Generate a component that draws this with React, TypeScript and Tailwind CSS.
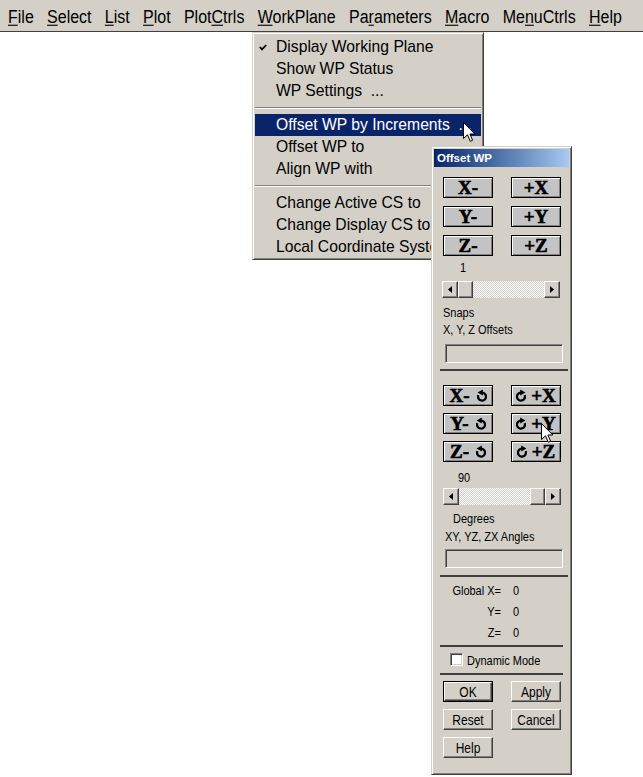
import React from "react";

type Item = { label: string; checked?: boolean; active?: boolean } | "sep";

const bar: [string, string, string][] = [
  ["", "F", "ile"],
  ["", "S", "elect"],
  ["", "L", "ist"],
  ["", "P", "lot"],
  ["Plot", "C", "trls"],
  ["", "W", "orkPlane"],
  ["Pa", "r", "ameters"],
  ["", "M", "acro"],
  ["Me", "n", "uCtrls"],
  ["", "H", "elp"],
];

const menuItems: Item[] = [
  { label: "Display Working Plane", checked: true },
  { label: "Show WP Status" },
  { label: "WP Settings  ..." },
  "sep",
  { label: "Offset WP by Increments  ...", active: true },
  { label: "Offset WP to" },
  { label: "Align WP with" },
  "sep",
  { label: "Change Active CS to" },
  { label: "Change Display CS to" },
  { label: "Local Coordinate Systems" },
];

const raised =
  "border border-t-white border-l-white border-b-[#404040] border-r-[#404040] bg-[#d4d0c8] shadow-[inset_-1px_-1px_#808080]";
const sunken =
  "border border-t-[#808080] border-l-[#808080] border-b-white border-r-white shadow-[inset_1px_1px_#404040,inset_-1px_-1px_#d4d0c8]";

// tall, narrow dialog text like the reference
const tall = "origin-center scale-y-[1.2]";

function BigBtn({ children }: { children: React.ReactNode }) {
  return (
    <div className="flex h-[21px] w-[50px] items-center justify-center gap-[1px] border border-black bg-[#c3c3c3] font-['Liberation_Serif',serif] text-[19px] font-bold leading-none shadow-[inset_1px_1px_#fff,inset_-1px_-1px_#808080] [-webkit-text-stroke:0.6px_black]">
      {children}
    </div>
  );
}

function Rot({ flip }: { flip?: boolean }) {
  return (
    <svg width="10" height="14" viewBox="0 0 10 14" className={flip ? "-scale-x-100" : ""}>
      <path d="M5 3.6 A4 4 0 1 1 1.3 6.2" fill="none" stroke="black" strokeWidth="2.3" />
      <path d="M0.6 3.6 L5.8 0.6 L5.8 6.6 Z" fill="black" />
    </svg>
  );
}

function Arrow({ dir }: { dir: "l" | "r" }) {
  return (
    <div className={`flex h-full w-[16px] items-center justify-center ${raised}`}>
      <svg width="4" height="7" viewBox="0 0 4 7">
        <path d={dir === "l" ? "M4 0 L0 3.5 L4 7 Z" : "M0 0 L4 3.5 L0 7 Z"} fill="black" />
      </svg>
    </div>
  );
}

function Scroll({ thumb }: { thumb: "left" | "right" }) {
  return (
    <div className="flex h-[17px] w-[118px]">
      <Arrow dir="l" />
      {thumb === "left" && <div className={`h-full w-[15px] ${raised}`} />}
      <div className="h-full flex-1 bg-[repeating-conic-gradient(#ffffff_0%_25%,#d4d0c8_0%_50%)] bg-[length:2px_2px]" />
      {thumb === "right" && <div className={`h-full w-[15px] ${raised}`} />}
      <Arrow dir="r" />
    </div>
  );
}

function Btn({ label, def }: { label: string; def?: boolean }) {
  return (
    <div className={`h-[21px] w-[50px] ${def ? "border border-black" : ""}`}>
      <div className={`flex h-full w-full items-center justify-center text-[12px] ${raised}`}>
        <span className={`inline-block ${tall}`}>{label}</span>
      </div>
    </div>
  );
}

function Cursor({ className }: { className: string }) {
  return (
    <svg width="13" height="21" viewBox="0 0 13 21" className={`absolute z-30 ${className}`}>
      <path
        d="M0.5 0.5 L0.5 16.5 L4.5 12.8 L7.3 19.3 L9.6 18.3 L6.9 12 L11.8 12 Z"
        fill="white"
        stroke="black"
        strokeWidth="1"
        strokeLinejoin="miter"
      />
    </svg>
  );
}

export default function App() {
  return (
    <div className="relative h-[777px] w-[643px] overflow-hidden bg-white font-['Liberation_Sans',Arial,sans-serif] text-black">
      {/* Menu bar */}
      <div className="flex h-[32px] items-center gap-[13.3px] border-b border-[#404040] bg-[#d4d0c8] pl-[8px] pt-[2px] text-[16px]">
        {bar.map(([a, u, b]) => (
          <span key={a + u + b} className="inline-block origin-center scale-y-[1.1] whitespace-pre">
            {a}
            <span className="underline decoration-1 underline-offset-[2px]">{u}</span>
            {b}
          </span>
        ))}
      </div>

      {/* WorkPlane dropdown */}
      <div className="absolute left-[252px] top-[32px] z-10 h-[228px] w-[232px] border border-t-[#d4d0c8] border-l-[#d4d0c8] border-b-[#404040] border-r-[#404040] bg-[#d4d0c8] p-[2px] shadow-[inset_1px_1px_#fff,inset_-1px_-1px_#808080]">
        <div className="flex flex-col pt-[1px]">
          {menuItems.map((it, i) =>
            it === "sep" ? (
              <div key={i} className="flex h-[12px] items-center">
                <div className="h-[2px] w-full border-t border-b border-t-[#808080] border-b-white" />
              </div>
            ) : (
              <div
                key={i}
                className={`relative flex h-[22px] items-center whitespace-pre pl-[21px] text-[15.7px] ${
                  it.active ? "bg-[#0a246a] text-white" : ""
                }`}
              >
                {it.checked && (
                  <svg width="8" height="7" viewBox="0 0 8 7" className="absolute left-[4px] top-[8px]">
                    <path d="M0.8 3 L3 5.4 L7.2 1" fill="none" stroke="black" strokeWidth="1.8" />
                  </svg>
                )}
                {it.label}
              </div>
            )
          )}
        </div>
      </div>

      {/* Offset WP dialog */}
      <div className="absolute left-[431px] top-[146px] z-20 flex h-[629px] w-[141px] flex-col border border-t-[#d4d0c8] border-l-[#d4d0c8] border-b-[#404040] border-r-[#404040] bg-[#d4d0c8] p-[2px] shadow-[inset_1px_1px_#fff,inset_-1px_-1px_#808080]">
        <div className="h-[18px] bg-linear-to-r from-[#0a246a] to-[#a6caf0] pl-[3px] text-[11.5px] font-bold leading-[18px] text-white">
          Offset WP
        </div>

        <div className="flex flex-col pl-[9px] pr-[8px] text-[11px] leading-[14px]">
          <div className="mt-[10px] grid grid-cols-[50px_50px] gap-x-[18px] gap-y-[8px]">
            <BigBtn>X-</BigBtn>
            <BigBtn>+X</BigBtn>
            <BigBtn>Y-</BigBtn>
            <BigBtn>+Y</BigBtn>
            <BigBtn>Z-</BigBtn>
            <BigBtn>+Z</BigBtn>
          </div>

          <div className={`mt-[4px] h-[14px] pl-[17px] ${tall}`}>1</div>
          <div className="-ml-[1px] mt-[7px]">
            <Scroll thumb="left" />
          </div>
          <div className={`mt-[7px] h-[14px] ${tall}`}>Snaps</div>
          <div className={`mt-[3px] h-[14px] ${tall}`}>X, Y, Z Offsets</div>
          <div className={`ml-[2px] mt-[8px] h-[19px] w-[118px] ${sunken}`} />
          <div className="-ml-[3px] mt-[6px] h-[2px] w-[128px] bg-[#404040]" />

          <div className="mt-[14px] grid grid-cols-[50px_50px] gap-x-[18px] gap-y-[7px]">
            <BigBtn>
              X-<span className="w-[5px]" />
              <Rot />
            </BigBtn>
            <BigBtn>
              <Rot flip />
              <span className="w-[3px]" />+X
            </BigBtn>
            <BigBtn>
              Y-<span className="w-[5px]" />
              <Rot />
            </BigBtn>
            <BigBtn>
              <Rot flip />
              <span className="w-[3px]" />+Y
            </BigBtn>
            <BigBtn>
              Z-<span className="w-[5px]" />
              <Rot />
            </BigBtn>
            <BigBtn>
              <Rot flip />
              <span className="w-[3px]" />+Z
            </BigBtn>
          </div>

          <div className={`mt-[8px] h-[14px] pl-[15px] ${tall}`}>90</div>
          <div className="mt-[4px]">
            <Scroll thumb="right" />
          </div>
          <div className={`mt-[6px] h-[14px] pl-[10px] ${tall}`}>Degrees</div>
          <div className={`mt-[4px] h-[14px] pl-[2px] ${tall}`}>XY, YZ, ZX Angles</div>
          <div className={`ml-[2px] mt-[6px] h-[19px] w-[118px] ${sunken}`} />
          <div className="-ml-[3px] mt-[7px] h-[2px] w-[128px] bg-[#404040]" />

          <div className="mt-[6px] flex flex-col gap-y-[7px]">
            {[
              ["Global X=", "0"],
              ["Y=", "0"],
              ["Z=", "0"],
            ].map(([l, v]) => (
              <div key={l} className={`flex h-[14px] ${tall}`}>
                <span className="w-[58px] text-right">{l}</span>
                <span className="ml-[12px]">{v}</span>
              </div>
            ))}
          </div>
          <div className="-ml-[3px] mt-[6px] h-[2px] w-[123px] bg-[#404040]" />

          <div className="ml-[7px] mt-[6px] flex h-[13px] items-center gap-[4px]">
            <div className={`h-[13px] w-[13px] bg-white ${sunken}`} />
            <span className={`inline-block ${tall}`}>Dynamic Mode</span>
          </div>
          <div className="-ml-[3px] mt-[7px] h-[2px] w-[123px] bg-[#404040]" />

          <div className="mt-[6px] grid grid-cols-[50px_50px] gap-x-[18px] gap-y-[7px]">
            <Btn label="OK" def />
            <Btn label="Apply" />
            <Btn label="Reset" />
            <Btn label="Cancel" />
            <Btn label="Help" />
          </div>
        </div>
      </div>

      <Cursor className="left-[463px] top-[122px]" />
      <Cursor className="left-[541px] top-[423px]" />
    </div>
  );
}
